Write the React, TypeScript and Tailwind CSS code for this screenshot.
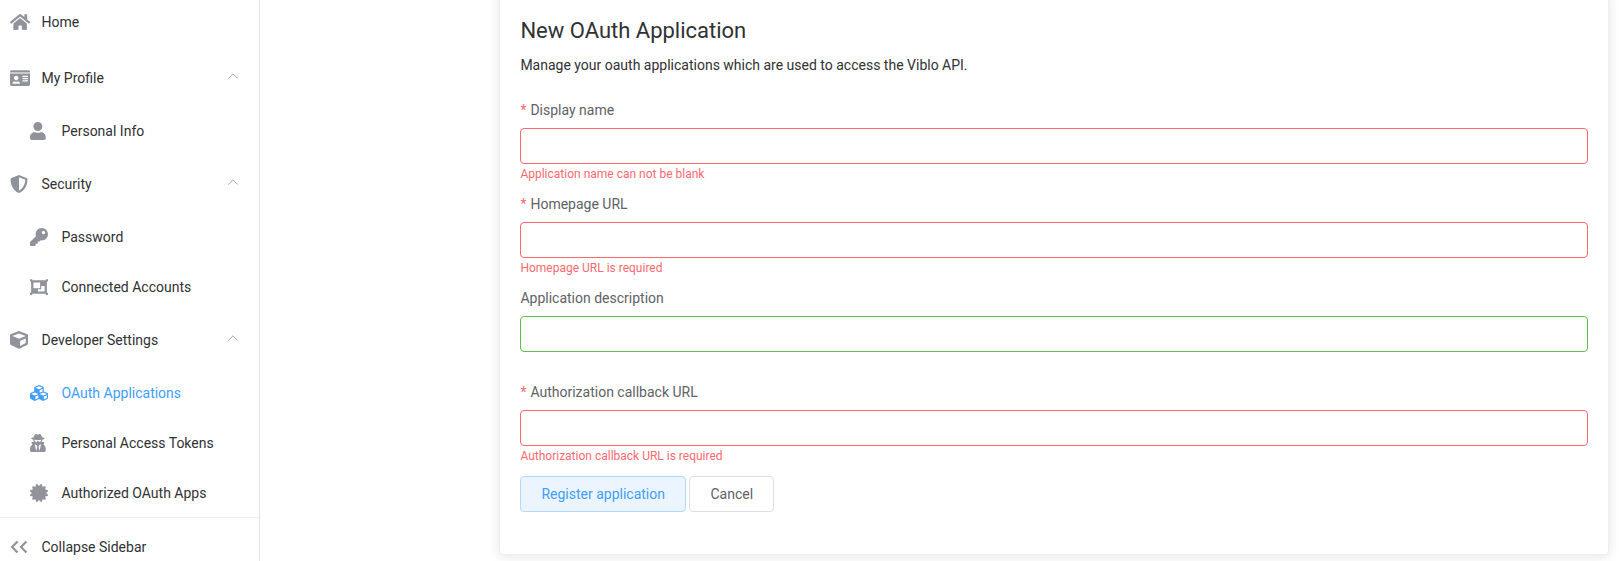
import type { ReactNode } from "react";
import type { IconType } from "react-icons";
import {
  FaCertificate,
  FaCube,
  FaCubes,
  FaHome,
  FaIdCard,
  FaKey,
  FaObjectGroup,
  FaShieldAlt,
  FaUser,
  FaUserSecret,
} from "react-icons/fa";

function ArrowUp() {
  return (
    <svg
      className="ml-auto mr-5 -mt-1 h-3 w-3"
      viewBox="0 0 12 12"
      fill="none"
      stroke="#909399"
      strokeWidth="0.8"
      strokeLinecap="round"
    >
      <path d="M1.6 8.2 6 3.8l4.4 4.4" />
    </svg>
  );
}

function DoubleLeft({ className }: { className?: string }) {
  return (
    <svg
      className={className}
      viewBox="0 0 18 18"
      fill="none"
      stroke="currentColor"
      strokeWidth="2.2"
    >
      <path d="M7.5 3.5 2.1 9l5.4 5.5M16.4 3.5 11 9l5.4 5.5" />
    </svg>
  );
}

function Row({
  icon: Icon,
  iconWidth = "w-[18px]",
  label,
  group,
  nested,
  active,
}: {
  icon: IconType | typeof DoubleLeft;
  iconWidth?: string;
  label: string;
  group?: boolean;
  nested?: boolean;
  active?: boolean;
}) {
  return (
    <a
      className={`flex shrink-0 items-center ${nested ? "h-[50px] pl-[30px]" : "h-14 pl-[10px]"} ${
        active ? "text-[#409eff]" : "text-[#303133]"
      }`}
    >
      <span className={`flex w-[31.5px] shrink-0 ${active ? "text-[#409eff]" : "text-[#909399]"}`}>
        <Icon className={`h-[18px] shrink-0 ${iconWidth}`} />
      </span>
      <span>{label}</span>
      {group && <ArrowUp />}
    </a>
  );
}

function Field({
  label,
  required,
  error,
}: {
  label: string;
  required?: boolean;
  error?: string;
}) {
  return (
    <div className="mb-[22px] h-[72px]">
      <label className="flex h-9 items-center text-[#606266]">
        {required && <span className="mr-1 text-[#fa6a6f]">*</span>}
        {label}
      </label>
      <input
        type="text"
        className={`block h-9 w-full rounded border bg-white px-[15px] outline-none ${
          required ? "border-[#fa6a6f]" : "border-[#5dbe45]"
        }`}
      />
      {error && <p className="pt-1 text-[12px] leading-[12px] text-[#fa6a6f]">{error}</p>}
    </div>
  );
}

function Button({ primary, children }: { primary?: boolean; children: ReactNode }) {
  return (
    <button
      type="button"
      className={`h-9 rounded border px-5 ${
        primary
          ? "border-[#b3d8ff] bg-[#ecf5ff] text-[#409eff]"
          : "border-[#dcdfe6] bg-white text-[#606266]"
      }`}
    >
      {children}
    </button>
  );
}

export default function App() {
  return (
    <div className="flex h-[561px] overflow-hidden bg-white font-[Roboto,sans-serif] text-[14px] leading-normal text-[#303133]">
      <nav className="flex w-[260px] shrink-0 flex-col border-r border-[#e6e6e6]">
        <div className="-mt-1.5 flex h-[524px] flex-col border-b border-[#e6f0f8]">
          <Row icon={FaHome} iconWidth="w-[20.25px]" label="Home" />
          <Row icon={FaIdCard} iconWidth="w-[20.25px]" label="My Profile" group />
          <Row icon={FaUser} iconWidth="w-[15.75px]" label="Personal Info" nested />
          <Row icon={FaShieldAlt} label="Security" group />
          <Row icon={FaKey} label="Password" nested />
          <Row icon={FaObjectGroup} label="Connected Accounts" nested />
          <Row icon={FaCube} label="Developer Settings" group />
          <Row icon={FaCubes} label="OAuth Applications" nested active />
          <Row icon={FaUserSecret} iconWidth="w-[15.75px]" label="Personal Access Tokens" nested />
          <Row icon={FaCertificate} label="Authorized OAuth Apps" nested />
        </div>
        <div className="pt-px">
          <Row icon={DoubleLeft} label="Collapse Sidebar" />
        </div>
      </nav>
      <main className="flex-1 pl-[239.4px] pr-[10px]">
        <section className="-mt-2.5 h-[565px] rounded border border-[#ebeef5] bg-white px-5 pt-[25px] shadow-[0_2px_12px_0_rgba(0,0,0,0.1)]">
          <h1 className="text-[22px] leading-[30px]">New OAuth Application</h1>
          <p className="mt-[9px] mb-4 h-[21px] leading-[21px]">
            Manage your oauth applications which are used to access the Viblo API.
          </p>
          <Field label="Display name" required error="Application name can not be blank" />
          <Field label="Homepage URL" required error="Homepage URL is required" />
          <Field label="Application description" />
          <Field label="Authorization callback URL" required error="Authorization callback URL is required" />
          <div className="mt-[30px] flex gap-[3.5px]">
            <Button primary>Register application</Button>
            <Button>Cancel</Button>
          </div>
        </section>
      </main>
    </div>
  );
}
